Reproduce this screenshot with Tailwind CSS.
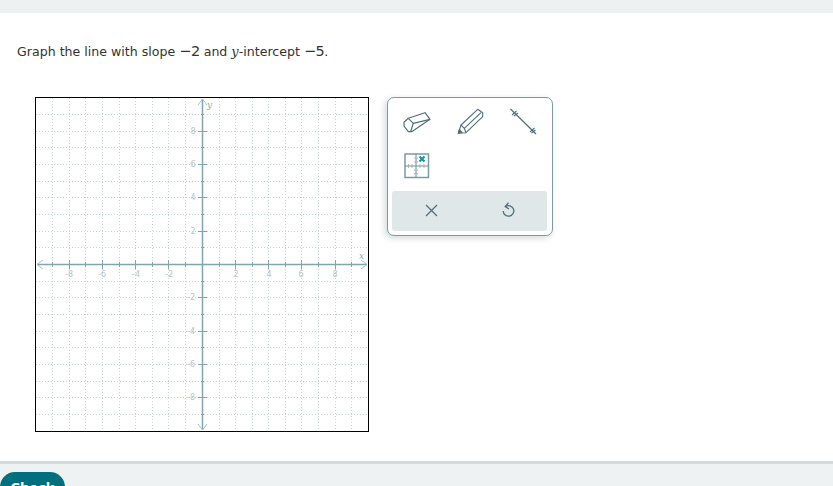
<!DOCTYPE html>
<html lang="en">
  <head>
    <meta charset="UTF-8" />
    <title>Graph the line</title>
    <script src="https://cdn.jsdelivr.net/npm/@tailwindcss/browser@4"></script>
  </head>
  <body class="h-screen overflow-hidden bg-white flex flex-col font-['DejaVu_Sans',sans-serif] text-[#333]">
    <!-- top bar -->
    <div class="h-[13px] shrink-0 bg-[#eef1f2]"></div>

    <main class="flex-1 min-h-0">
      <p class="pl-[17px] pt-[29px] h-[84px] text-[12.6px] leading-[18px] whitespace-nowrap">
        Graph the line with slope <span class="text-[14.5px] tracking-[-0.5px]">−2</span> and <span class="font-['DejaVu_Serif',serif] italic text-[13px]">y</span>-intercept <span class="text-[14.5px] tracking-[-0.5px]">−5</span>.
      </p>

      <div class="flex items-start pl-[35px]">
        <!-- graph -->
        <div class="w-[334px] h-[335px] border border-black shrink-0">
          <svg width="332" height="333" viewBox="36 98 332 333" class="block">
            <g stroke="#c6d3d7" stroke-width="1" stroke-dasharray="1 2" fill="none">
              <path d="M52.5 98V431M69.5 98V431M85.5 98V431M102.5 98V431M119.5 98V431M135.5 98V431M152.5 98V431M168.5 98V431M185.5 98V431M219.5 98V431M235.5 98V431M252.5 98V431M268.5 98V431M285.5 98V431M301.5 98V431M318.5 98V431M335.5 98V431M351.5 98V431" />
              <path d="M36 114.5H368M36 131.5H368M36 147.5H368M36 164.5H368M36 181.5H368M36 197.5H368M36 214.5H368M36 231.5H368M36 247.5H368M36 281.5H368M36 297.5H368M36 314.5H368M36 331.5H368M36 347.5H368M36 364.5H368M36 381.5H368M36 397.5H368M36 414.5H368" />
            </g>
            <!-- axes -->
            <g stroke="#85a3ac" fill="none">
              <path d="M37 264.500H367M202.500 99V430" stroke-width="1.500" />
              <path d="M52.500 262V267M69.500 260V269M85.500 262V267M102.500 260V269M119.500 262V267M135.500 260V269M152.500 262V267M168.500 260V269M185.500 262V267M219.500 262V267M235.500 260V269M252.500 262V267M268.500 260V269M285.500 262V267M301.500 260V269M318.500 262V267M335.500 260V269M351.500 262V267" />
              <path d="M201 114.500H204M198 131.500H207M201 147.500H204M198 164.500H207M201 181.500H204M198 197.500H207M201 214.500H204M198 231.500H207M201 247.500H204M201 281.500H204M198 297.500H207M201 314.500H204M198 331.500H207M201 347.500H204M198 364.500H207M201 381.500H204M198 397.500H207M201 414.500H204" />
              <path d="M198 105L202.500 99L207 105M198 424L202.500 430L207 424M43 260L37 264.500L43 269M361 260L367 264.500L361 269" stroke="#a9c0c7" />
            </g>
            <g fill="#b5c3c7" font-size="8" font-family="DejaVu Sans, sans-serif" text-anchor="middle">
              <text x="69" y="277">-8</text><text x="102" y="277">-6</text><text x="136" y="277">-4</text><text x="169" y="277">-2</text>
              <text x="236" y="277">2</text><text x="269" y="277">4</text><text x="301" y="277">6</text><text x="335" y="277">8</text>
              <text x="193" y="134">8</text><text x="193" y="167">6</text><text x="193" y="200">4</text><text x="193" y="234">2</text>
              <text x="191" y="300">-2</text><text x="191" y="334">-4</text><text x="191" y="367">-6</text><text x="191" y="400">-8</text>
            </g>
            <g fill="#8fa5ab" font-size="9" font-family="DejaVu Serif, serif" font-style="italic">
              <text x="207" y="108">y</text><text x="359" y="259">x</text>
            </g>
          </svg>
        </div>

        <!-- tools panel -->
        <div class="ml-[18px] w-[166px] h-[139px] shrink-0 border border-[#7f9aa1] rounded-[7px] bg-white shadow-[-2px_2px_6px_rgba(70,100,110,0.25)] flex flex-col">
          <div class="h-[93px] shrink-0 pl-[16px] pt-[10px] grid grid-cols-[26px_26px_26px] grid-rows-[28px_28px] gap-x-[27px] gap-y-[17px] content-start">
            <!-- eraser -->
            <svg width="28" height="28" viewBox="0 0 28 28" fill="none" stroke="#4d707c" stroke-width="1.200" stroke-linejoin="round" class="-ml-[1px]">
              <path d="M1 14.300L5.300 10.300L22 4.700L27 11.300L8.700 23.700H5.300L1 18Z" />
              <path d="M5.300 10.300L10.300 15.300L27 11.300M10.300 15.300L7.700 23.500" />
            </svg>
            <!-- pencil -->
            <svg width="28" height="28" viewBox="0 0 28 28" fill="none" stroke="#4d707c" stroke-width="1.100" stroke-linejoin="round">
              <path d="M1.300 25.300L4 17L20.700 1.300L25.700 4.700V8.700L9 24.700Z" />
              <path d="M4 17L7.300 20.300L9 24.700M7.300 20.300L24 4.700" />
              <path d="M1.300 25.300L2.300 21.500L5 24.300Z" fill="#4d707c" />
            </svg>
            <!-- line -->
            <svg width="28" height="28" viewBox="0 0 28 28" fill="none" stroke="#4d707c">
              <path d="M.5 1L26 26" stroke-width="1.200" />
              <path d="M2 7L6.500 3M4 8L8 5M20 24L24.500 20M21.500 25L25.500 22" stroke-width="1.100" />
            </svg>
            <!-- point / grid tool -->
            <svg width="26" height="26" viewBox="0 0 26 26" fill="none" class="row-start-2 col-start-1">
              <rect x="1" y="1" width="23.500" height="23.500" stroke="#7d9aa3" stroke-width="1.500" />
              <path d="M1 13H24.500M12 1V24.500" stroke="#6f8e98" stroke-width="1" />
              <path d="M4.500 11V15M8 11V15M16 11V15M20 11V15M10 17H14M10 20.500H14M10 9H14M10 5H14" stroke="#a6b8bd" stroke-width="1" />
              <path d="M15.500 3.500L20.500 8.500M20.500 3.500L15.500 8.500" stroke="#0d93ad" stroke-width="2" />
            </svg>
          </div>
          <div class="ml-[4px] mr-[5px] h-[40px] bg-[#e0e7e9] rounded-[3px] flex items-center pb-[2px]">
            <div class="w-[78px] flex justify-center">
              <svg width="13" height="13" viewBox="0 0 13 13" fill="none" stroke="#4d707c" stroke-width="1.300"><path d="M1 1L12 12M12 1L1 12" /></svg>
            </div>
            <div class="w-[76px] flex justify-center">
              <svg width="13" height="16" viewBox="0 0 13 16" fill="none" stroke="#4d707c" stroke-width="1.300">
                <path d="M3.500 4.500A5.300 5.300 0 1 1 1.200 9" />
                <path d="M6.500 .8L3.200 4.600L7 7" />
              </svg>
            </div>
          </div>
        </div>
      </div>
    </main>

    <!-- footer -->
    <footer class="h-[25px] shrink-0 border-t-[3px] border-[#d1dadd] bg-[#eef2f3] pt-[8px] overflow-hidden">
      <button class="w-[65px] h-[30px] rounded-[16px] bg-[#00707f] text-white text-[13px] font-bold leading-[24px] flex justify-center items-start pt-[4px]">Check</button>
    </footer>
  </body>
</html>
